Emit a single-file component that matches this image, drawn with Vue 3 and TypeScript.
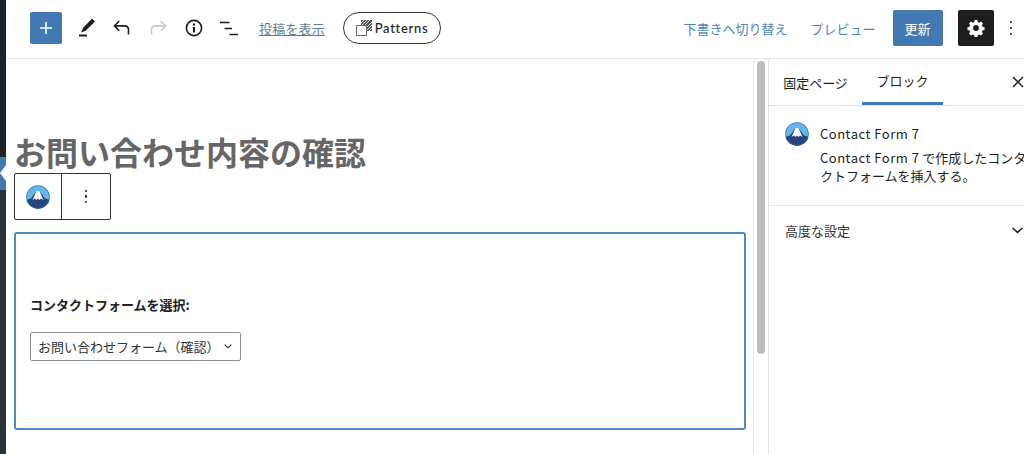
<script setup lang="ts">
const descLatin: string = 'Contact Form 7'
const descRest: string = ' で作成したコンタクトフォームを挿入する。'
</script>

<template>
  <div class="page">
    <aside class="adminbar"><div class="adminbar-top"></div><div class="adminbar-active"><span class="notch"></span></div><div class="adminbar-rest"></div></aside>
    <div class="main">
      <header class="topbar">
        <div class="tools">
          <button class="add" aria-label="add">
            <svg width="14" height="14" viewBox="0 0 14 14"><path d="M7 1v12M1 7h12" stroke="#fff" stroke-width="1.6" /></svg>
          </button>
          <svg class="ic pen" width="24" height="24" viewBox="0 0 24 24"><path d="M22 5.500 19 2.500 10 12l-1.800 4.400 4.500-1.700zM6 18.600h8V20.400H6z" fill="#1e1e1e" /></svg>
          <svg class="ic undo" width="24" height="24" viewBox="0 0 24 24"><path d="M19.500 18.500v-4.600c0-2.400-1.700-4-4-4H6.200M10.200 5 5.400 9.900l4.800 4.900" fill="none" stroke="#1e1e1e" stroke-width="1.600" /></svg>
          <svg class="ic redo" width="24" height="24" viewBox="0 0 24 24"><path d="M4.500 18.500v-4.600c0-2.400 1.700-4 4-4h9.300M13.800 5l4.800 4.900-4.800 4.900" fill="none" stroke="#c9c9c9" stroke-width="1.600" /></svg>
          <svg class="ic info" width="24" height="24" viewBox="0 0 24 24"><circle cx="12" cy="12" r="7.600" fill="none" stroke="#1e1e1e" stroke-width="1.600" /><path d="M11 11h2v5.600h-2zM11 7.600h2v2h-2z" fill="#1e1e1e" /></svg>
          <svg class="ic list" width="24" height="24" viewBox="0 0 24 24"><path d="M3 5.700h9.500v1.600H3zM7.500 11.700H15v1.600H7.500zM12.500 17.700H21v1.600h-8.500z" fill="#1e1e1e" /></svg>
          <a class="view">投稿を表示</a>
          <div class="patterns">
            <svg width="16" height="16" viewBox="0 0 16 16"><path d="M5 0h11v11H5z" fill="#555" /><path d="M5 3 8 0M5 6l6-6M5 9l9-9M7 11 16 2M10 11l6-6M13 11l3-3" stroke="#fff" stroke-width=".8" /><path d="M.5 5.500h10v10H.5z" fill="#fff" stroke="#666" /></svg>
            <span>Patterns</span>
          </div>
        </div>
        <div class="actions">
          <a class="link draft">下書きへ切り替え</a>
          <a class="link preview">プレビュー</a>
          <button class="update">更新</button>
          <button class="settings" aria-label="settings">
            <svg width="20" height="20" viewBox="0 0 24 24"><path fill="#fff" fill-rule="evenodd" d="M10.300 3h3.400l.5 2.500 1.600.7 2.200-1.400 2.400 2.400-1.400 2.200.7 1.600 2.500.5v3.400l-2.500.5-.7 1.600 1.400 2.200-2.400 2.400-2.200-1.400-1.600.7-.5 2.500h-3.400l-.5-2.500-1.600-.7-2.200 1.400-2.400-2.400 1.400-2.200-.7-1.600-2.500-.5v-3.400l2.500-.5.700-1.600-1.400-2.200 2.400-2.400 2.200 1.400 1.600-.7zM12 9a3.500 3.500 0 1 0 0 7 3.500 3.500 0 0 0 0-7z" transform="translate(0 -.5)" /></svg>
          </button>
          <span class="dots top"><i></i><i></i><i></i></span>
        </div>
      </header>
      <div class="workspace">
        <section class="editor">
          <div class="canvas">
            <h1 class="title">お問い合わせ内容の確認</h1>
            <div class="block-toolbar">
              <div class="tb-icon">
                <svg class="fuji" width="24" height="24" viewBox="0 0 24 24"><use href="#fuji-art" /></svg>
              </div>
              <div class="tb-more"><span class="dots"><i></i><i></i><i></i></span></div>
            </div>
            <div class="block">
              <label class="pick-label">コンタクトフォームを選択:</label>
              <div class="select">
                <span>お問い合わせフォーム（確認）</span>
                <svg width="8" height="5" viewBox="0 0 8 5"><path d="M.7.700 4 3.800 7.300.700" fill="none" stroke="#222" stroke-width="1.100" /></svg>
              </div>
            </div>
          </div>
          <div class="scrollbar"><div class="thumb"></div></div>
        </section>
        <aside class="sidebar">
          <div class="tabs">
            <div class="tab page-tab">固定ページ</div>
            <div class="tab active">ブロック</div>
            <svg class="close" width="12" height="12" viewBox="0 0 12 12"><path d="M1 1l10 10M11 1 1 11" stroke="#1e1e1e" stroke-width="1.500" /></svg>
          </div>
          <div class="card">
            <svg class="fuji" width="24" height="24" viewBox="0 0 24 24">
              <defs><clipPath id="fc"><circle cx="12" cy="12" r="11.800" /></clipPath></defs>
              <g id="fuji-art" clip-path="url(#fc)">
                <rect width="24" height="24" fill="#62b8ea" />
                <path d="M0 24V15L5 13.500 10.500 6h3L19 13.500 24 15V24z" fill="#26437f" />
                <path d="M6.500 15 10.500 6h3L17.500 15 15 13.500 13.500 15 12 13.500 10.500 15 9 13.500z" fill="#fff" />
                <circle cx="12" cy="12" r="11.500" fill="none" stroke="#3a6aa5" stroke-width=".8" />
              </g>
            </svg>
            <div class="card-text">
              <div class="card-title">Contact Form 7</div>
              <p class="card-desc"><span class="latin">{{ descLatin }}</span>{{ descRest }}</p>
            </div>
          </div>
          <div class="advanced">
            <span>高度な設定</span>
            <svg width="11" height="7" viewBox="0 0 11 7"><path d="M.6 1l4.900 4.400L10.400 1" fill="none" stroke="#1e1e1e" stroke-width="1.500" /></svg>
          </div>
        </aside>
      </div>
    </div>
  </div>
</template>

<style>
html, body { margin: 0; overflow: hidden; background: #fff; }
</style>

<style scoped>
.page { display: flex; width: 1024px; height: 454px; overflow: hidden; font-family: "Noto Sans CJK JP", "Noto Sans", sans-serif; color: #1e1e1e; font-size: 13px; text-spacing-trim: space-all; }
.adminbar { width: 6px; flex: none; display: flex; flex-direction: column; background: #1d2327; }
.adminbar-top { height: 157px; background: #1d2327; }
.adminbar-active { height: 33px; background: #4279b3; position: relative; }
.notch { position: absolute; left: 0; top: 8px; width: 0; height: 0; border-style: solid; border-width: 8px 6px 8px 0; border-color: transparent #fff transparent transparent; }
.adminbar-rest { flex: 1; background: #2c3338; }
.main { flex: 1; min-width: 0; display: flex; flex-direction: column; }
.topbar { height: 56px; padding-bottom: 2px; flex: none; border-bottom: 1px solid #e6e6e6; display: flex; justify-content: space-between; align-items: center; }
.tools { display: flex; align-items: center; padding-left: 24px; }
.add { width: 32px; height: 32px; border: 0; padding: 0; border-radius: 2px; background: #4279b3; display: flex; align-items: center; justify-content: center; }
.ic { flex: none; }
.pen { margin-left: 11px; }
.undo { margin-left: 12px; }
.redo { margin-left: 14px; }
.info { margin-left: 11px; }
.list { margin-left: 11px; }
.view { margin-left: 18px; color: #5c7f8f; text-decoration: underline; letter-spacing: .2px; }
.patterns { margin-left: 18px; height: 32px; width: 98px; box-sizing: border-box; border: 1px solid #333; border-radius: 16px; display: flex; align-items: center; justify-content: center; gap: 3px; font-family: "Lato", sans-serif; font-size: 13px; letter-spacing: .7px; font-weight: 500; }
.actions { display: flex; align-items: center; }
.link { color: #4b86bd; }
.preview { margin-left: 23px; }
.update { margin-left: 17px; width: 50px; height: 36px; border: 0; border-radius: 2px; background: #4279b3; color: #fff; font: inherit; padding: 0; }
.settings { margin-left: 15px; width: 36px; height: 36px; border: 0; padding: 0; border-radius: 2px; background: #1e1e1e; display: flex; align-items: center; justify-content: center; }
.dots { display: inline-flex; flex-direction: column; gap: 3px; }
.dots i { width: 2.500px; height: 2.500px; border-radius: 50%; background: #1e1e1e; display: block; }
.dots.top { margin-left: 16px; margin-right: 12px; gap: 3.500px; }
.workspace { flex: 1; min-height: 0; display: flex; }
.editor { flex: 1; min-width: 0; display: flex; }
.canvas { flex: 1; min-width: 0; padding: 70px 7px 0 8px; }
.title { margin: 0; font-size: 32px; line-height: 44px; font-weight: 700; color: #666; }
.block-toolbar { display: flex; width: 97px; height: 47px; box-sizing: border-box; border: 1px solid #333; border-radius: 2px; }
.tb-icon { width: 46px; border-right: 1px solid #333; display: flex; align-items: center; justify-content: center; }
.tb-more { flex: 1; display: flex; align-items: center; justify-content: center; }
.block { margin-top: 12px; height: 198px; box-sizing: border-box; border: 2px solid #4f8ac2; border-radius: 3px; padding: 62px 14px 0; }
.pick-label { display: block; font-weight: 700; font-size: 13px; line-height: 18px; color: #222; }
.select { margin-top: 18px; width: 211px; height: 29px; box-sizing: border-box; border: 1px solid #8c8f94; border-radius: 2px; display: flex; align-items: center; justify-content: space-between; padding: 0 8px 0 7px; color: #2c3338; font-size: 13px; }
.scrollbar { width: 15px; flex: none; border-left: 1px solid #e6e6e6; box-sizing: border-box; padding: 2px 3px 0 3px; }
.thumb { width: 8px; height: 293px; border-radius: 4px; background: #bdbdbd; }
.sidebar { width: 256px; flex: none; box-sizing: border-box; border-left: 1px solid #e0e0e0; overflow: hidden; }
.tabs { height: 46px; border-bottom: 1px solid #e0e0e0; display: flex; position: relative; box-sizing: content-box; }
.tab { height: 46px; display: flex; align-items: center; justify-content: center; font-size: 13px; box-sizing: border-box; }
.page-tab { width: 93px; }
.active { width: 81px; border-bottom: 3px solid #4279b3; }
.close { position: absolute; left: 243px; top: 17px; }
.card { display: flex; padding: 16px 0 20px 16px; border-bottom: 1px solid #e6e6e6; gap: 11px; height: 100px; box-sizing: border-box; }
.fuji { flex: none; }
.card-text { width: 220px; flex: none; }
.card-title { font-size: 13px; font-weight: 400; letter-spacing: .5px; line-height: 24px; }
.card-desc { margin: 3px 0 0; font-size: 13px; line-height: 18px; width: 212px; color: #1e1e1e; }
.latin { letter-spacing: .5px; }
.advanced { height: 49px; display: flex; align-items: center; justify-content: space-between; padding: 0 0 0 16px; }
.advanced span { font-size: 13px; color: #333; }
.advanced svg { margin-right: 1px; }
</style>
